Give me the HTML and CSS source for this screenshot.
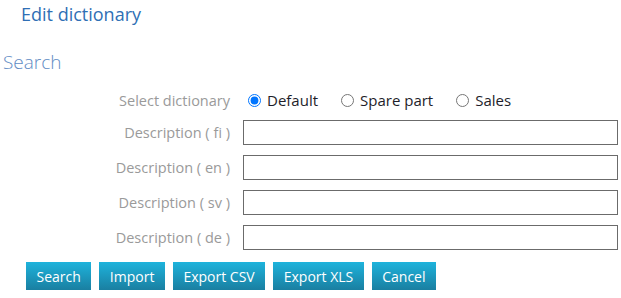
FILE: index.html
```html
<!DOCTYPE html>
<html lang="en">
<head>
    <meta charset="UTF-8">
    <meta name="viewport" content="width=device-width, initial-scale=1.0">
    <title>Edit dictionary</title>
    <link rel="stylesheet" href="styles.css">
</head>
<body>
    <div class="page">
        <h1 class="page-title">Edit dictionary</h1>

        <h2 class="section-title">Search</h2>

        <form class="search-form">
            <div class="form-row radio-row">
                <label class="form-label">Select dictionary</label>
                <div class="radio-group">
                    <label class="radio-item"><input type="radio" name="dict" checked> Default</label>
                    <label class="radio-item"><input type="radio" name="dict"> Spare part</label>
                    <label class="radio-item"><input type="radio" name="dict"> Sales</label>
                </div>
            </div>
            <div class="form-row">
                <label class="form-label">Description ( fi )</label>
                <input class="text-input" type="text">
            </div>
            <div class="form-row">
                <label class="form-label">Description ( en )</label>
                <input class="text-input" type="text">
            </div>
            <div class="form-row">
                <label class="form-label">Description ( sv )</label>
                <input class="text-input" type="text">
            </div>
            <div class="form-row">
                <label class="form-label">Description ( de )</label>
                <input class="text-input" type="text">
            </div>

            <div class="button-bar">
                <button type="button" class="btn">Search</button>
                <button type="button" class="btn">Import</button>
                <button type="button" class="btn">Export CSV</button>
                <button type="button" class="btn">Export XLS</button>
                <button type="button" class="btn">Cancel</button>
            </div>
        </form>
    </div>
</body>
</html>
```

FILE: styles.css
```css
body {
    margin: 0;
    font-family: 'Open Sans', 'Noto Sans', sans-serif;
    background: #fff;
    color: #222;
}

.page {
    padding: 0 3px 0 0;
}

.page-title {
    margin: 0;
    padding: 2px 0 0 21px;
    height: 26px;
    font-size: 18px;
    font-weight: 400;
    line-height: 24px;
    color: #2f6fb5;
}

.section-title {
    margin: 20px 0 0 0;
    padding-left: 3px;
    height: 28px;
    font-size: 19px;
    font-weight: 300;
    line-height: 28px;
    color: #5f8cc4;
}

.search-form {
    margin-top: 14px;
}

.form-row {
    display: grid;
    grid-template-columns: 230px 1fr;
    column-gap: 13px;
    align-items: center;
    margin-bottom: 10px;
}

.radio-row {
    margin-bottom: 10px;
}

.form-label {
    text-align: right;
    font-size: 14.5px;
    color: #9a9a9a;
}

.radio-group {
    display: flex;
    gap: 18px;
    font-size: 15px;
    color: #1e1e2a;
}

.radio-item {
    display: flex;
    align-items: center;
    gap: 6px;
}

.radio-item input {
    margin: 0 0 0 5px;
    width: 13px;
    height: 13px;
}

.text-input {
    box-sizing: border-box;
    height: 25px;
    width: 100%;
    margin: 0;
    border: 1px solid #6b6b6b;
    border-radius: 0;
    padding: 2px 4px;
    font: inherit;
}

.button-bar {
    display: flex;
    gap: 8px;
    padding-left: 26px;
    margin-top: 12px;
}

.btn {
    height: 28px;
    padding: 0 10.5px;
    border: none;
    border-radius: 0;
    background: linear-gradient(to bottom, #1eb3dc 0%, #1a7fa1 100%);
    color: #fff;
    font-family: inherit;
    font-size: 14px;
    cursor: pointer;
}
```
